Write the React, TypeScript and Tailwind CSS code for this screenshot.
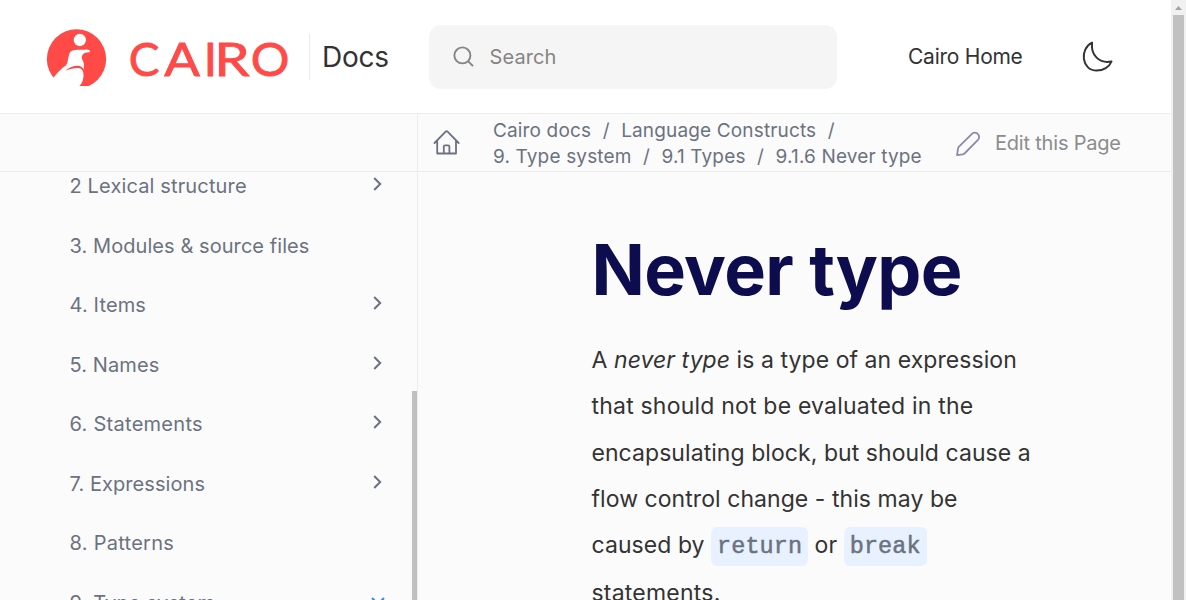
import React from "react";

const items = [
  { label: "2 Lexical structure", arrow: "right", tracking: "tracking-[0.14px]" },
  { label: "3. Modules & source files", arrow: "", tracking: "tracking-[0.07px]" },
  { label: "4. Items", arrow: "right", tracking: "tracking-[0.15px]" },
  { label: "5. Names", arrow: "right", tracking: "tracking-[0.1px]" },
  { label: "6. Statements", arrow: "right", tracking: "tracking-[0.28px]" },
  { label: "7. Expressions", arrow: "right", tracking: "tracking-[0.07px]" },
  { label: "8. Patterns", arrow: "", tracking: "tracking-[0.28px]" },
  { label: "9. Type system", arrow: "down", tracking: "tracking-[0.15px]" },
];

const letters = [
  { char: "C", x: 296, width: 92 },
  { char: "A", x: 403, width: 107 },
  { char: "I", x: 521, width: 30 },
  { char: "R", x: 553, width: 106 },
  { char: "O", x: 662, width: 116 },
];

function Logo() {
  return (
    <svg className="block h-[58px] w-[244px] shrink-0" viewBox="48 39 732 174" role="img" aria-label="Cairo">
      <circle cx="139.5" cy="132" r="89" fill="#ff4a48" />
      <circle cx="149.5" cy="75" r="18.5" fill="#fff" />
      <path
        fill="#fff"
        d="M40 220L69 190Q88 165 108 151Q113 145 114 133Q117 116 121 110Q128 104 142 104H164Q175 103 180 107L179 112Q162 111 157 121Q153 129 158 136Q164 147 161 162Q162 184 158 197Q154 208 145 216L130 240H40Z"
      />
      <path fill="#ff4a48" d="M106 167Q123 152 143 152Q155 152 162 164V183Q160 163 149 160Q136 156 106 167Z" />
      <g fill="#ff4a48" stroke="#ff4a48" strokeWidth="2.5" className="font-['Lato',sans-serif] text-[142px]">
        {letters.map((l) => (
          <text
            key={l.char}
            x={l.x}
            y="184"
            textLength={l.char === "I" ? undefined : l.width}
            lengthAdjust="spacingAndGlyphs"
          >
            {l.char}
          </text>
        ))}
      </g>
    </svg>
  );
}

function Header() {
  return (
    <header className="flex h-[114px] shrink-0 items-center border-b border-[#ececec] bg-white pl-[46px]">
      <Logo />
      <div className="ml-[19px] flex h-[46px] w-[120px] items-center border-l border-[#ebebeb] pl-3 text-[28px] tracking-[-0.25px] text-[#333]">
        Docs
      </div>
      <div className="flex h-16 w-[408px] items-center rounded-[12px] bg-[#f5f5f5] pl-6">
        <svg className="size-[21px]" viewBox="0 0 21 21" fill="none" stroke="#858585" strokeWidth="1.9">
          <circle cx="9.4" cy="9.4" r="8" />
          <path d="M15 15.2L20 20.2" />
        </svg>
        <span className="ml-[15.5px] text-[20px] tracking-[0.1px] text-[#858585]">Search</span>
      </div>
      <span className="ml-[71px] w-[114px] whitespace-nowrap text-[21px] tracking-[-0.25px] text-[#333]">Cairo Home</span>
      <svg className="ml-[59px] size-[32px]" viewBox="0 0 32 32" fill="none" stroke="#333" strokeWidth="2" strokeLinejoin="round">
        <path d="M11.1 1.7C-1.7 7.8 0.4 29.6 15.8 29.6C22.2 29.6 28.3 26.2 30.5 20.5C18.4 23 9.4 14 11.1 1.7Z" />
      </svg>
    </header>
  );
}

function Slash() {
  return <span className="mx-[11.5px]">/</span>;
}

function Toolbar() {
  return (
    <div className="flex h-[58px] border-b border-[#ececec] text-[19px] text-[#6b7280]">
      <div className="w-[418px] shrink-0 border-r border-[#ececec]" />
      <svg className="mt-[15px] ml-[14.5px] size-[28px] shrink-0" viewBox="0 0 28 28" fill="none" stroke="#6b7280" strokeWidth="1.8" strokeLinecap="round" strokeLinejoin="round">
        <path d="M1.5 14L12.4 2.8Q13.6 1.6 14.8 2.8L25.7 14M4.2 11.5V24.5H23V11.5M10.8 24V17.5Q10.8 16.4 12 16.4H15.2Q16.4 16.4 16.4 17.5V24" />
      </svg>
      <nav className="ml-[32.5px] w-[446px] shrink-0 pt-1 leading-[26px] tracking-[0.15px] whitespace-nowrap">
        <div className="flex">
          <span>Cairo docs</span><Slash /><span>Language Constructs</span><Slash />
        </div>
        <div className="flex">
          <span>9. Type system</span><Slash /><span>9.1 Types</span><Slash /><span>9.1.6 Never type</span>
        </div>
      </nav>
      <div className="ml-4 flex items-center whitespace-nowrap text-[20px] tracking-[-0.2px] text-[#8c8c8c]">
        <svg className="mt-[3px] size-[26px]" viewBox="0 0 26 26" fill="none" stroke="#8c8ba8" strokeWidth="1.8" strokeLinejoin="round">
          <path d="M2 24.2L3 17.6Q3.2 16.5 4 15.7L17.2 2.6Q19.5 .7 22.4 2.6Q25.4 5.1 23.2 8.7L10 22Q9 23 7.7 23.3L2 24.2Z" />
        </svg>
        <span className="ml-[14px]">Edit this Page</span>
      </div>
    </div>
  );
}

function Sidebar() {
  return (
    <aside className="flex w-[418px] shrink-0 overflow-hidden border-r border-[#ececec]">
      <ul className="-mt-[15.5px] flex-1 pl-[69.5px] text-[20px] text-[#6b7280]">
        {items.map((item) => (
          <li key={item.label} className="flex h-[59.5px] items-center justify-between pr-[29px]">
            <span className={"whitespace-nowrap " + item.tracking}>{item.label}</span>
            {item.arrow === "right" && (
              <svg className="-mt-[4px] h-[14px] w-[10px]" viewBox="0 0 10 14" fill="none" stroke="#6b7280" strokeWidth="2">
                <path d="M1.2 1L7.2 7L1.2 13" />
              </svg>
            )}
            {item.arrow === "down" && (
              <svg className="-mt-[3px] -mr-[2px] h-[8px] w-[14px]" viewBox="0 0 14 8" fill="none" stroke="#3b82f6" strokeWidth="2">
                <path d="M1 1L7 7L13 1" />
              </svg>
            )}
          </li>
        ))}
      </ul>
      <div className="mt-[219px] w-[5px] shrink-0 bg-[#c1c1c1]" />
    </aside>
  );
}

function Code({ children }: { children: React.ReactNode }) {
  return (
    <code className="rounded-[6px] bg-[#e8f1ff] px-[6px] pt-[6px] pb-[6px] font-['Liberation_Mono',monospace] text-[23.5px] text-[#6b7280] [-webkit-text-stroke:0.5px_#6b7280]">
      {children}
    </code>
  );
}

export default function App() {
  return (
    <div className="flex h-[600px] w-[1186px] overflow-hidden bg-[#fbfbfb] font-['Inter',sans-serif]">
      <div className="flex w-[1171px] shrink-0 flex-col">
        <Header />
        <Toolbar />
        <div className="flex min-h-0 flex-1">
          <Sidebar />
          <main className="min-w-0 flex-1 overflow-hidden pl-[173.5px] whitespace-nowrap">
            <h1 className="mt-[56px] text-[70px] leading-[84px] font-bold tracking-[-0.6px] text-[#0c0c4f]">Never type</h1>
            <p className="mt-[25px] text-[23px] leading-[46.25px] tracking-[0.06px] text-[#333]">
              A <em>never type</em> is a type of an expression<br />
              <span className="tracking-[0.2px]">that should not be evaluated in the</span><br />
              encapsulating block, but should cause a<br />
              flow control change - this may be<br />
              caused by <Code>return</Code> or <Code>break</Code><br />
              <span className="tracking-[0.22px]">statements.</span>
            </p>
          </main>
        </div>
      </div>
      <div className="flex w-[15px] shrink-0 flex-col items-center bg-[#f1f1f1]">
        <svg className="h-[15px] w-[9px] shrink-0" viewBox="0 0 9 15"><path d="M1 10L4.5 6L8 10Z" fill="#a3a3a3" /></svg>
        <div className="w-[11px] flex-1 bg-[#c1c1c1]" />
      </div>
    </div>
  );
}
